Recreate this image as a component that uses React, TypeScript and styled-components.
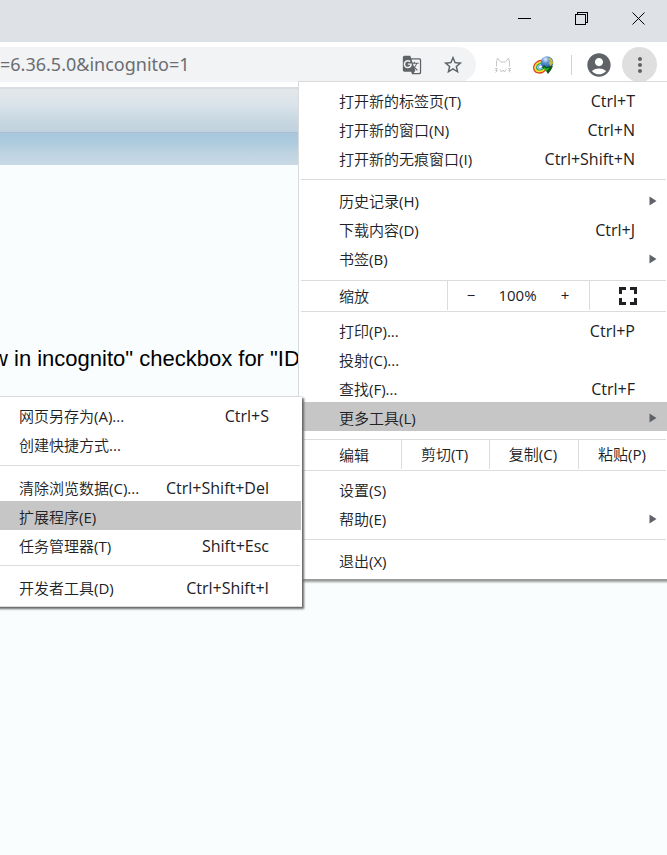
import React from "react";
import styled, { createGlobalStyle, css } from "styled-components";
import { MdAccountCircle, MdGTranslate, MdMoreVert, MdStarBorder } from "react-icons/md";

const GlobalStyle = createGlobalStyle`
  *, *::before, *::after { box-sizing: border-box; }
  body {
    margin: 0;
    background: #fafdfe;
    overflow: hidden;
    font-family: "Open Sans", "Noto Sans CJK SC", sans-serif;
  }
  button, input { font: inherit; color: inherit; border: 0; background: none; padding: 0; }
  button { cursor: default; }
`;

const Browser = styled.div`
  position: relative;
  display: flex;
  flex-direction: column;
  min-height: 100vh;
`;

const TitleBar = styled.header`
  display: flex;
  justify-content: flex-end;
  height: 42px;
  background: #dee1e6;
`;

const WindowButton = styled.button`
  display: flex;
  align-items: center;
  justify-content: center;
  width: 57px;
  height: 37px;
  color: #000;
`;

const Toolbar = styled.div`
  display: flex;
  align-items: center;
  height: 47px;
  padding: 0 10px 0 0;
  background: #fff;
  border-bottom: 2px solid #d9dce0;
`;

const Omnibox = styled.div`
  flex: 1;
  min-width: 0;
  display: flex;
  align-items: center;
  gap: 20px;
  height: 35px;
  padding-right: 12px;
  border-radius: 0 18px 18px 0;
  background: #f1f3f4;
  color: #5f6368;
`;

const Address = styled.input`
  flex: 1;
  min-width: 0;
  height: 32px;
  padding-bottom: 2px;
  font-family: "Noto Sans", sans-serif;
  font-size: 18px;
  color: #6a6d72;
  outline: none;
`;

const IconButton = styled.button<{ $active?: boolean; $size: number }>`
  flex: none;
  display: flex;
  align-items: center;
  justify-content: center;
  width: ${(p) => p.$size}px;
  height: ${(p) => p.$size}px;
  border-radius: 50%;
  color: #5f6368;
  background: ${(p) => (p.$active ? "#dfdfdf" : "transparent")};
`;

const Extensions = styled.div`
  display: flex;
  align-items: center;
  gap: 18px;
  margin-left: 16px;
`;

const Divider = styled.span`
  width: 1px;
  height: 20px;
  margin: 0 12px 0 17px;
  background: #cfd1d4;
`;

const Profile = styled.div`
  display: flex;
  align-items: center;
  gap: 8px;
`;

const Page = styled.main`
  flex: 1;
  overflow: hidden;
`;

const Banner = styled.div`
  height: 44px;
  background: linear-gradient(#e3e7ea, #dbe4eb 35%, #c9d8e2 70%, #c1d2de);
  border-bottom: 1px solid #a8c0d2;
`;

const SubBanner = styled.div`
  height: 32px;
  background: linear-gradient(#a9c7dd, #adcbde 30%, #bdd3e1 60%, #c9dae5);
`;

const Instruction = styled.p`
  margin: 180px 0 0;
  font: 22px/28px "Liberation Sans", sans-serif;
  color: #000;
  white-space: nowrap;
  text-indent: -8px;
`;

const panel = css`
  position: absolute;
  background: #fff;
  border: 1px solid #d9dbdd;
  color: #202124;
  font-size: 15px;
  font-weight: 400;
  line-height: 29px;
`;

const MainMenu = styled.nav`
  ${panel}
  top: 81px;
  right: 0;
  width: 369px;
  padding: 3px 0 5px;
  border-right: 0;
  border-bottom-color: #999;
  box-shadow: 3px 2px 2px #999;
`;

const SubmenuAnchor = styled.div`
  position: relative;
`;

const SubMenu = styled.nav`
  ${panel}
  top: -6px;
  right: 365px;
  width: 324px;
  padding: 3px 0 5px;
  border-right-color: #fff;
  box-shadow: 2px 2px 2px #666;
`;

const Item = styled.button<{ $active?: boolean }>`
  display: flex;
  align-items: center;
  width: 100%;
  height: 29px;
  padding: 3px 32px 0 40px;
  text-align: left;
  white-space: nowrap;
  background: ${(p) => (p.$active ? "#c6c6c6" : "transparent")};
`;

const ItemLabel = styled.span`
  flex: 1;
`;

const Han = styled.span`
  font-weight: 350;
`;

const Shortcut = styled.span`
  font-size: 16px;
`;

const Arrow = styled.svg`
  flex: none;
  margin: 0 -22px 1px 0;
`;

const Separator = styled.hr<{ $before: number; $after: number }>`
  height: 1px;
  margin: ${(p) => p.$before}px 1px ${(p) => p.$after}px 2px;
  border: 0;
  background: #dadce0;
`;

const ActionRow = styled.div<{ $columns: string }>`
  display: grid;
  grid-template-columns: ${(p) => p.$columns};
  height: 30px;
`;

const ActionTitle = styled.span`
  padding: 1px 0 0 40px;
`;

const Action = styled.button`
  display: flex;
  align-items: center;
  justify-content: center;
  height: 29px;
  padding-right: 2px;
  border-left: 1px solid #dadce0;
`;

const ZoomGroup = styled.div`
  display: grid;
  grid-template-columns: 46px 1fr 48px;
  height: 29px;
  border-left: 1px solid #dadce0;
  text-align: center;
`;

type Entry = { label: string; keys?: string; more?: boolean; active?: boolean };

/* Chinese words take a lighter weight than the access key that follows them. */
function Caption({ text }: { text: string }) {
  const end = text.search(/[(.]/);
  const split = end < 0 ? text.length : end;
  return (
    <span>
      <Han>{text.slice(0, split)}</Han>
      {text.slice(split)}
    </span>
  );
}

function MenuItem({ label, keys, more, active }: Entry) {
  return (
    <Item type="button" $active={active}>
      <ItemLabel><Caption text={label} /></ItemLabel>
      {keys && <Shortcut>{keys}</Shortcut>}
      {more && (
        <Arrow width="8" height="10" viewBox="0 0 8 10" aria-hidden="true">
          <path d="M0.5 0.5 7.5 5 0.5 9.5Z" fill="#5f6368" />
        </Arrow>
      )}
    </Item>
  );
}

function CatIcon() {
  return (
    <svg width="20" height="20" viewBox="0 0 20 20" fill="none" stroke="#c8c8c8" aria-hidden="true">
      <path d="M3.500 11.500V7l1-4 3 4h5l3-4 1 4v4.500" />
      <path d="M2 13.500h2.500L2.500 15.500h2l-2 2M7 14.500l1.500 2.500 1.500-2 1.500 2 1.500-2.500M18 13.500h-2.500l2 2h-2l2 2" />
    </svg>
  );
}

function GlobeIcon() {
  return (
    <svg width="22" height="20" viewBox="0 0 22 20" aria-hidden="true">
      <defs>
        <radialGradient id="globe" cx="38%" cy="25%" r="75%">
          <stop offset="0" stopColor="#e4eef8" />
          <stop offset="0.4" stopColor="#5b93d6" />
          <stop offset="1" stopColor="#1b4f9c" />
        </radialGradient>
      </defs>
      <g fill="none" strokeWidth="1.6" transform="rotate(-30 8 12)">
        <ellipse cx="8.500" cy="12" rx="7" ry="5.800" stroke="#e0452c" />
        <ellipse cx="8.500" cy="12" rx="5.500" ry="4.400" stroke="#f8e11c" />
        <ellipse cx="8.500" cy="12" rx="4" ry="3" stroke="#35b04a" />
        <ellipse cx="8.500" cy="12" rx="2.500" ry="1.600" stroke="#8fb4ea" />
      </g>
      <circle cx="15" cy="7.500" r="6.300" fill="url(#globe)" />
      <path d="M17.500 2.500c2.500 1.500 3.800 3.500 3.500 6L18.500 11l-2-3 1.500-2-2-2Z" fill="#c2b94a" />
      <path d="M10 12.500l2-2.500 2 2 7-1-2 4-3 4-2.500-4Z" fill="#0d5214" />
      <path d="M11.500 11.500l2.500 2 4-1-3 3.500-3-2Z" fill="#1fb52a" />
    </svg>
  );
}

const openEntries: Entry[] = [
  { label: "打开新的标签页(T)", keys: "Ctrl+T" },
  { label: "打开新的窗口(N)", keys: "Ctrl+N" },
  { label: "打开新的无痕窗口(I)", keys: "Ctrl+Shift+N" },
];
const libraryEntries: Entry[] = [
  { label: "历史记录(H)", more: true },
  { label: "下载内容(D)", keys: "Ctrl+J" },
  { label: "书签(B)", more: true },
];
const pageEntries: Entry[] = [
  { label: "打印(P)...", keys: "Ctrl+P" },
  { label: "投射(C)..." },
  { label: "查找(F)...", keys: "Ctrl+F" },
];
const settingsEntries: Entry[] = [{ label: "设置(S)" }, { label: "帮助(E)", more: true }];
const saveEntries: Entry[] = [{ label: "网页另存为(A)...", keys: "Ctrl+S" }, { label: "创建快捷方式..." }];
const toolEntries: Entry[] = [
  { label: "清除浏览数据(C)...", keys: "Ctrl+Shift+Del" },
  { label: "扩展程序(E)", active: true },
  { label: "任务管理器(T)", keys: "Shift+Esc" },
];

const items = (entries: Entry[]) => entries.map((e) => <MenuItem key={e.label} {...e} />);

export default function App() {
  return (
    <>
      <GlobalStyle />
      <Browser>
        <TitleBar>
          <WindowButton aria-label="最小化">
            <svg width="14" height="14" stroke="currentColor"><path d="M0 6.500h13" /></svg>
          </WindowButton>
          <WindowButton aria-label="还原">
            <svg width="14" height="14" fill="none" stroke="currentColor" shapeRendering="crispEdges">
              <path d="M0.500 2.500h10v10h-10zM2.500 2.500v-2h10v10h-2" />
            </svg>
          </WindowButton>
          <WindowButton aria-label="关闭">
            <svg width="14" height="14" stroke="currentColor"><path d="M0.500 0.500l12 12M12.500 0.500l-12 12" /></svg>
          </WindowButton>
        </TitleBar>
        <Toolbar>
          <Omnibox>
            <Address aria-label="地址" defaultValue="=6.36.5.0&incognito=1" />
            <IconButton $size={20} aria-label="翻译"><MdGTranslate size={20} /></IconButton>
            <IconButton $size={22} aria-label="收藏"><MdStarBorder size={22} /></IconButton>
          </Omnibox>
          <Extensions>
            <IconButton $size={22} aria-label="猫"><CatIcon /></IconButton>
            <IconButton $size={22} aria-label="IDM"><GlobeIcon /></IconButton>
          </Extensions>
          <Divider />
          <Profile>
            <IconButton $size={30} aria-label="个人资料"><MdAccountCircle size={28} /></IconButton>
            <IconButton $size={35} $active aria-label="菜单"><MdMoreVert size={24} /></IconButton>
          </Profile>
        </Toolbar>
        <Page>
          <Banner />
          <SubBanner />
          <Instruction>w in incognito" checkbox for "ID</Instruction>
        </Page>
        <MainMenu aria-label="菜单">
          {items(openEntries)}
          <Separator $before={7} $after={5} />
          {items(libraryEntries)}
          <Separator $before={8} $after={0} />
          <ActionRow $columns="148px 142px 1fr">
            <ActionTitle><Caption text="缩放" /></ActionTitle>
            <ZoomGroup>
              <button aria-label="缩小">−</button>
              <span>100%</span>
              <button aria-label="放大">+</button>
            </ZoomGroup>
            <Action aria-label="全屏">
              <svg width="18" height="18" fill="none" stroke="#202124" strokeWidth="3">
                <path d="M1.500 7V1.500H7M11 1.500h5.500V7M16.500 11v5.500H11M7 16.500H1.500V11" />
              </svg>
            </Action>
          </ActionRow>
          <Separator $before={0} $after={3} />
          {items(pageEntries)}
          <SubmenuAnchor>
            <MenuItem label="更多工具(L)" more active />
            <SubMenu aria-label="更多工具">
              {items(saveEntries)}
              <Separator $before={7} $after={6} />
              {items(toolEntries)}
              <Separator $before={6} $after={6} />
              <MenuItem label="开发者工具(D)" keys="Ctrl+Shift+I" />
            </SubMenu>
          </SubmenuAnchor>
          <Separator $before={8} $after={0} />
          <ActionRow $columns="102px 88px 89px 1fr">
            <ActionTitle><Caption text="编辑" /></ActionTitle>
            <Action><Caption text="剪切(T)" /></Action>
            <Action><Caption text="复制(C)" /></Action>
            <Action><Caption text="粘贴(P)" /></Action>
          </ActionRow>
          <Separator $before={0} $after={3} />
          {items(settingsEntries)}
          <Separator $before={7} $after={5} />
          <MenuItem label="退出(X)" />
        </MainMenu>
      </Browser>
    </>
  );
}
